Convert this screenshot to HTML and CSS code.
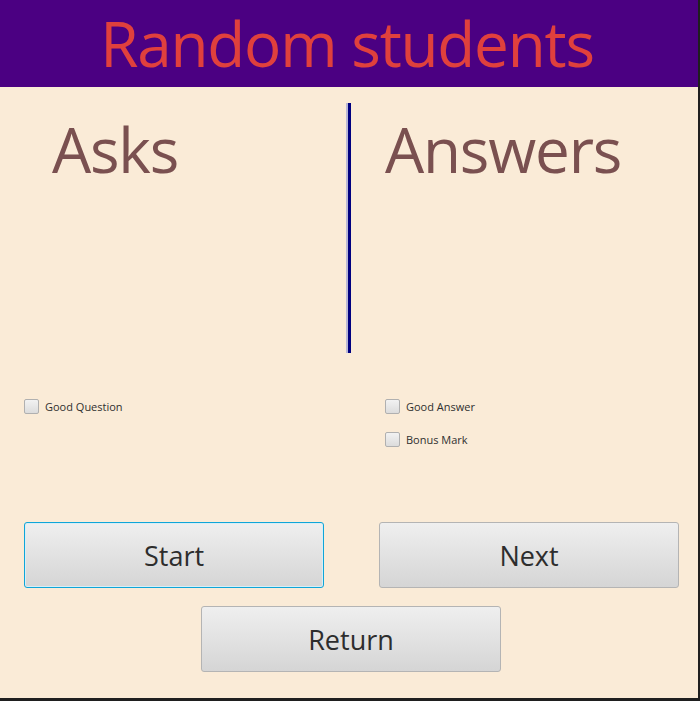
FILE: index.html
```html
<!DOCTYPE html>
<html>
<head>
<meta charset="utf-8">
<link rel="stylesheet" href="styles.css">
</head>
<body>
<div class="app">
  <header class="header"><h1 class="title">Random students</h1></header>
  <section class="panels">
    <div class="panel panel-left"><h2 class="heading">Asks</h2></div>
    <div class="divider"></div>
    <div class="panel panel-right"><h2 class="heading">Answers</h2></div>
  </section>
  <section class="checks">
    <div class="check-col check-left">
      <label class="check"><span class="box"></span>Good Question</label>
    </div>
    <div class="check-col check-right">
      <label class="check"><span class="box"></span>Good Answer</label>
      <label class="check"><span class="box"></span>Bonus Mark</label>
    </div>
  </section>
  <section class="buttons">
    <div class="btn-row">
      <button class="btn btn-focus">Start</button>
      <button class="btn">Next</button>
    </div>
    <div class="btn-row btn-row-center">
      <button class="btn">Return</button>
    </div>
  </section>
</div>
</body>
</html>
```
FILE: styles.css
```css
html, body {
  margin: 0;
  padding: 0;
  background: #1f1f1f;
  width: 700px;
  height: 701px;
  overflow: hidden;
}
.app {
  width: 698px;
  height: 698px;
  background: #faebd7;
  font-family: "Open Sans", "Noto Sans", sans-serif;
  display: flex;
  flex-direction: column;
}
.header {
  height: 87px;
  background: #4b0082;
  display: flex;
  justify-content: center;
  align-items: center;
}
.title {
  margin: 0;
  font-weight: 400;
  font-size: 62px;
  line-height: 1;
  color: #e0403d;
  letter-spacing: -1.2px;
  transform: translate(-2px, -1px);
}
.panels {
  margin-top: 16px;
  height: 250px;
  display: flex;
}
.panel {
  display: flex;
  align-items: flex-start;
}
.panel-left {
  width: 346px;
  padding-left: 52px;
  box-sizing: border-box;
}
.panel-right {
  flex: 1;
  padding-left: 34px;
}
.heading {
  margin: 0;
  margin-top: 15px;
  font-weight: 400;
  font-size: 62px;
  line-height: 1;
  color: #7a5050;
  letter-spacing: -1.2px;
}
.divider {
  width: 2px;
  border-right: 3px solid #000080;
  background: #b9b7d6;
}
.checks {
  margin-top: 46px;
  display: flex;
  height: 123px;
}
.check-col {
  display: flex;
  flex-direction: column;
  gap: 18px;
}
.check-left {
  width: 385px;
  padding-left: 24px;
  box-sizing: border-box;
}
.check {
  display: flex;
  align-items: center;
  gap: 6px;
  font-family: "Open Sans", "Noto Sans", sans-serif;
  font-size: 11px;
  color: #2f2f2f;
  height: 15px;
}
.box {
  width: 13px;
  height: 13px;
  border: 1px solid #b0b0b0;
  border-radius: 2px;
  background: linear-gradient(#f2f2f2, #dcdcdc);
}
.buttons {
  display: flex;
  flex-direction: column;
  gap: 18px;
}
.btn-row {
  display: flex;
  gap: 55px;
  padding-left: 24px;
}
.btn-row-center {
  padding-left: 201px;
}
.btn {
  width: 300px;
  height: 66px;
  border: 1px solid #b4b4b4;
  border-radius: 3px;
  background: linear-gradient(#efefef, #d5d5d5);
  font-family: "Open Sans", "Noto Sans", sans-serif;
  font-size: 27px;
  color: #2d2d2d;
  padding: 0;
}
.btn-focus {
  border: 1px solid #0fa5d8;
  box-shadow: inset 0 0 0 1px #d6eef7;
}
```
